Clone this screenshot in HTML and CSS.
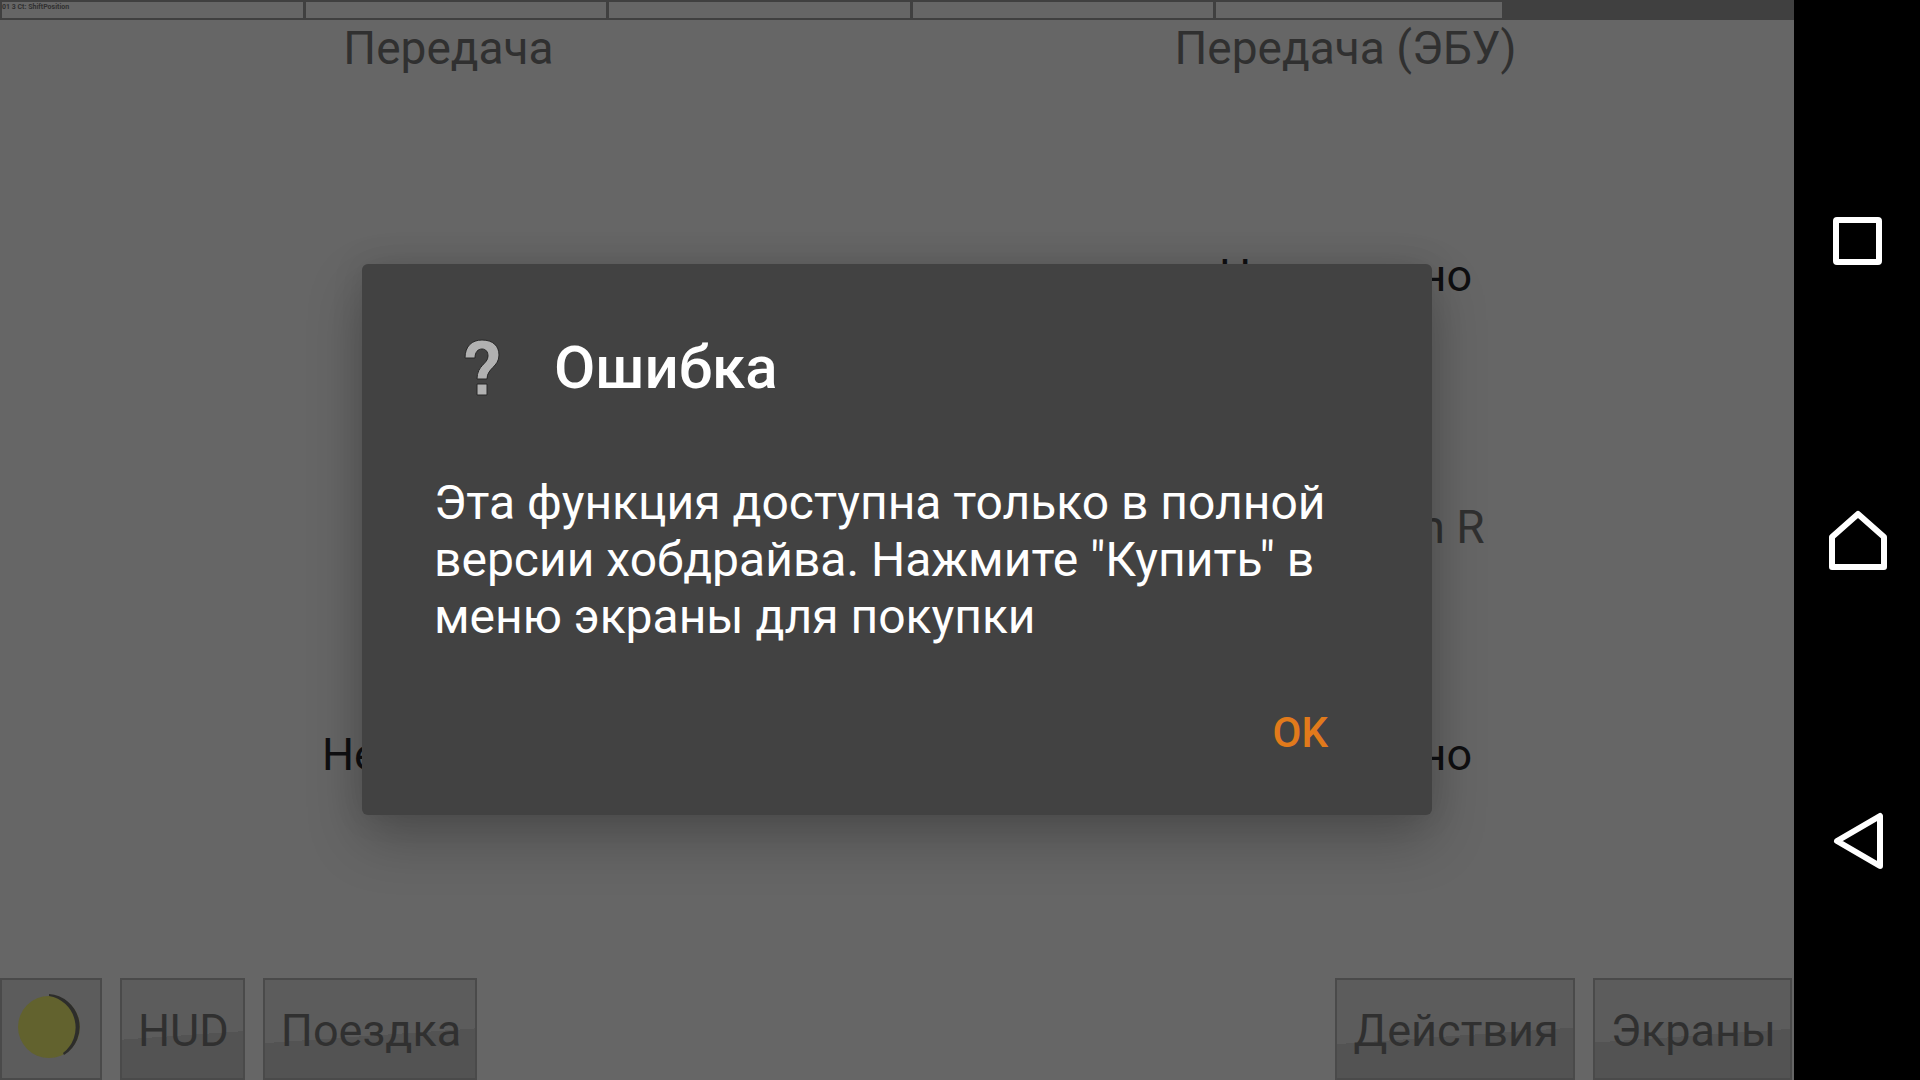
FILE: index.html
```html
<!DOCTYPE html>
<html lang="ru">
<head>
<meta charset="utf-8">
<title>HobDrive</title>
<link rel="stylesheet" href="styles.css">
</head>
<body>
<div class="device">
  <main class="app">
    <div class="status">
      <div class="segment">01 3 Ct: ShiftPosition</div>
      <div class="segment"></div>
      <div class="segment"></div>
      <div class="segment"></div>
      <div class="segment"></div>
      <div class="segment segment-off"></div>
    </div>
    <div class="gauges">
      <section class="gauge"><h2 class="gauge-title">Передача</h2><p class="gauge-value"></p></section>
      <section class="gauge"><h2 class="gauge-title">Передача (ЭБУ)</h2><p class="gauge-value">Недоступно</p></section>
      <section class="gauge"><h2 class="gauge-title">&nbsp;</h2><p class="gauge-value">Недоступно</p></section>
      <section class="gauge"><h2 class="gauge-title">Suspension R</h2><p class="gauge-value">Недоступно</p></section>
    </div>
    <div class="toolbar">
      <button class="tool tool-icon" type="button" aria-label="День">
        <svg class="sun" viewBox="0 0 66 66" aria-hidden="true">
          <circle cx="32" cy="33" r="31" fill="#62622e"/>
          <path d="M32 0 A33 33 0 0 1 47 61 L46 59 A32 32 0 0 0 32 2 Z" fill="#2d2d2b"/>
        </svg>
      </button>
      <button class="tool" type="button">HUD</button>
      <button class="tool" type="button">Поездка</button>
      <span class="spacer"></span>
      <button class="tool" type="button">Действия</button>
      <button class="tool" type="button">Экраны</button>
    </div>
    <div class="overlay">
      <div class="dialog" role="alertdialog" aria-labelledby="dialog-title" aria-describedby="dialog-text">
        <header class="dialog-head">
          <svg class="dialog-icon" viewBox="0 0 96 96" aria-hidden="true">
            <path d="M31 38 C31 26 38 20 48 20 C59 20 65 26 65 35 C65 47 53 48 53 59 H43 C43 45 54 44 54 36 C54 32 52 29 48 29 C44 29 41 32 41 38 Z M43 64 H53 V75 H43 Z" fill="#b1b1b1" stroke="#262626" stroke-width="1"/>
          </svg>
          <h1 class="dialog-title" id="dialog-title">Ошибка</h1>
        </header>
        <p class="dialog-text" id="dialog-text">Эта функция доступна только в полной версии хобдрайва. Нажмите "Купить" в меню экраны для покупки</p>
        <div class="dialog-actions"><button class="ok" type="button">OK</button></div>
      </div>
    </div>
  </main>
  <nav class="system">
    <button class="key" type="button" aria-label="Обзор"><svg class="key-icon" viewBox="0 0 64 64"><rect x="10" y="11" width="43" height="42" rx="1"/></svg></button>
    <button class="key" type="button" aria-label="Домой"><svg class="key-icon" viewBox="0 0 64 64"><path d="M32 5 L58 28 V58 H6 V28 Z"/></svg></button>
    <button class="key" type="button" aria-label="Назад"><svg class="key-icon" viewBox="0 0 64 64"><path d="M54 7 V57 L11 32 Z"/></svg></button>
  </nav>
</div>
</body>
</html>
```
FILE: styles.css
```css
* { box-sizing: border-box; }

body {
  margin: 0;
  background: #000;
  font-family: Roboto, "Noto Sans", sans-serif;
}

h1, h2, p { margin: 0; }

button {
  margin: 0;
  font-family: inherit;
  cursor: pointer;
}

.device {
  display: flex;
  min-height: 100vh;
}

.app {
  position: relative;
  flex: 1;
  display: flex;
  flex-direction: column;
  background: #666;
}

.status {
  display: flex;
  gap: 3px;
  padding: 2px 0 2px 2px;
  background: #404040;
}

.segment {
  flex: 300;
  min-width: 0;
  height: 16px;
  background: #666;
  color: #303030;
  font-size: 7px;
  font-weight: 700;
  line-height: 10px;
  white-space: nowrap;
}

.segment:nth-child(5) { flex-grow: 286; }

.segment-off {
  flex-grow: 288;
  background: #404040;
}

.gauges {
  flex: 1;
  display: grid;
  grid-template-columns: 1fr 1fr;
  grid-template-rows: 1fr 1fr;
}

.gauge {
  display: flex;
  flex-direction: column;
  text-align: center;
  line-height: 56px;
}

.gauge-title {
  color: #303030;
  font-size: 46px;
  font-weight: 400;
}

.gauge-value {
  flex: 1;
  display: flex;
  align-items: center;
  justify-content: center;
  padding-bottom: 24px;
  color: #0f0f11;
  font-size: 45px;
}

.toolbar {
  display: flex;
  gap: 18px;
  padding-right: 2px;
}

.tool {
  height: 102px;
  padding: 4px 14px 0 16px;
  border: 2px solid #4a4a4a;
  background: linear-gradient(176deg, #5c5c5c 56%, #535353 56%);
  color: #303030;
  font-size: 45px;
  line-height: 56px;
}

.tool-icon {
  width: 102px;
  padding: 0;
  background: #5c5c5c;
}

.sun {
  display: block;
  width: 66px;
  height: 66px;
  margin: 0 auto 4px 15px;
}

.spacer { flex: 1; }

.overlay {
  position: absolute;
  inset: 0;
  display: flex;
  align-items: center;
  justify-content: center;
  padding-bottom: 2px;
}

.dialog {
  width: 60%;
  max-width: 1070px;
  padding: 56px 72px 34px;
  border-radius: 6px;
  background: #424242;
  box-shadow: 0 24px 56px rgba(0, 0, 0, 0.24), 0 0 32px rgba(0, 0, 0, 0.1);
  color: #fff;
}

.dialog-head {
  display: flex;
  align-items: center;
  gap: 24px;
}

.dialog-icon {
  width: 96px;
  height: 96px;
}

.dialog-title {
  font-size: 60px;
  line-height: 72px;
  font-weight: 500;
}

.dialog-text {
  padding-top: 58px;
  font-size: 48px;
  line-height: 57px;
}

.dialog-actions {
  display: flex;
  justify-content: flex-end;
  padding-top: 40px;
}

.ok {
  padding: 24px 32px;
  border: 0;
  background: none;
  color: #e17a1b;
  font-size: 42px;
  line-height: 48px;
  font-weight: 500;
}

.system {
  width: 126px;
  display: flex;
  flex-direction: column;
  padding: 91px 0 89px 2px;
  background: #000;
}

.key {
  flex: 1;
  display: flex;
  align-items: center;
  justify-content: center;
  padding: 0;
  border: 0;
  background: none;
}

.key-icon {
  width: 64px;
  height: 64px;
  fill: none;
  stroke: #fff;
  stroke-width: 6;
  stroke-linejoin: round;
}
```
